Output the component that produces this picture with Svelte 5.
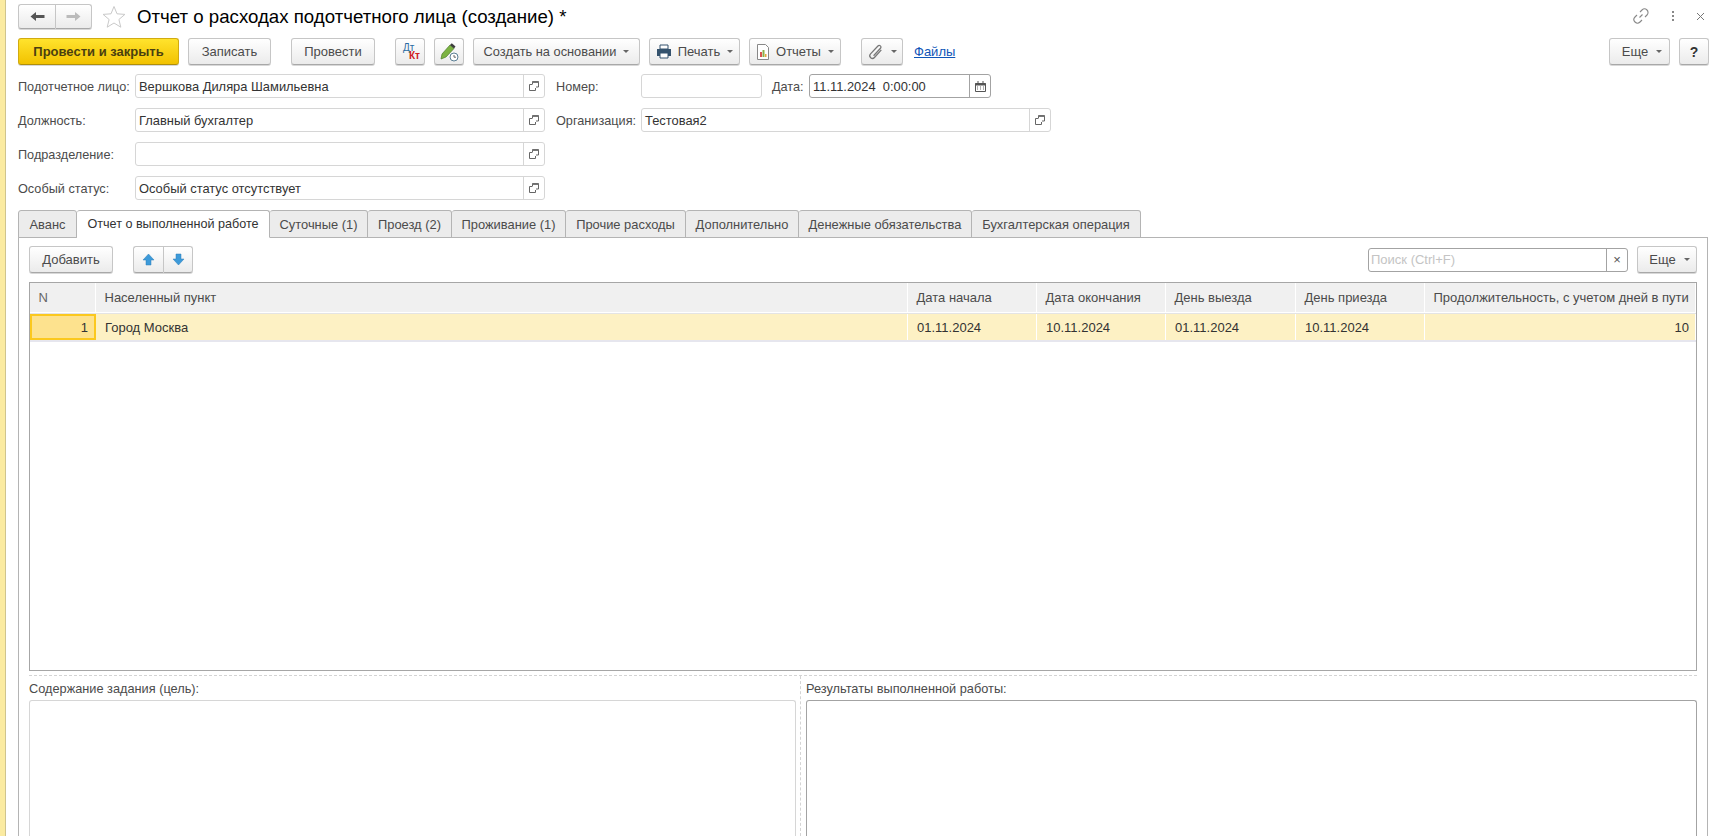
<script>
  const tabs = [
    { label: 'Аванс', w: 59 },
    { label: 'Отчет о выполненной работе', w: 193, active: true },
    { label: 'Суточные (1)', w: 98 },
    { label: 'Проезд (2)', w: 84 },
    { label: 'Проживание (1)', w: 114 },
    { label: 'Прочие расходы', w: 120 },
    { label: 'Дополнительно', w: 113 },
    { label: 'Денежные обязательства', w: 173 },
    { label: 'Бухгалтерская операция', w: 169 }
  ];

  const columns = [
    { title: 'N', value: '1', right: true, current: true },
    { title: 'Населенный пункт', value: 'Город Москва' },
    { title: 'Дата начала', value: '01.11.2024' },
    { title: 'Дата окончания', value: '10.11.2024' },
    { title: 'День выезда', value: '01.11.2024' },
    { title: 'День приезда', value: '10.11.2024' },
    { title: 'Продолжительность, с учетом дней в пути', value: '10', right: true }
  ];

  const people = [
    { label: 'Подотчетное лицо:', value: 'Вершкова Диляра Шамильевна' },
    { label: 'Должность:', value: 'Главный бухгалтер' },
    { label: 'Подразделение:', value: '' },
    { label: 'Особый статус:', value: 'Особый статус отсутствует' }
  ];
</script>

{#snippet openIcon()}
  <svg width="10" height="10" viewBox="0 0 10 10" fill="none" stroke="#666">
    <path d="M3.500 3V.5h6v5.500H7" />
    <path d="M.5 3.500h3M.5 3.500v6h6V7" />
    <path d="M3.500 .5h6v1.500h-6z" fill="#777" stroke="none" />
  </svg>
{/snippet}

{#snippet caret()}
  <span class="caret"></span>
{/snippet}

<div class="page">
  <div class="stripe"></div>
  <div class="content">
    <header class="titlebar">
      <div class="group nav">
        <button class="btn seg" aria-label="Назад">
          <svg width="15" height="11" viewBox="0 0 15 11"><path d="M.5 5.500L6 1v3h8.500v3H6v3z" fill="#555" /></svg>
        </button>
        <button class="btn seg" aria-label="Вперед">
          <svg width="15" height="11" viewBox="0 0 15 11"><path d="M14.500 5.500L9 1v3H.5v3H9v3z" fill="#bbb" /></svg>
        </button>
      </div>
      <svg class="star" width="24" height="23" viewBox="0 0 24 23"><path d="M12 1.500l3 7.300 7.900.6-6 5.100 1.900 7.700L12 18l-6.800 4.200 1.900-7.700-6-5.100 7.900-.6z" fill="#fff" stroke="#c9c9c9" /></svg>
      <h1>Отчет о расходах подотчетного лица (создание) *</h1>
      <div class="window-tools">
        <svg width="18" height="18" viewBox="0 0 18 18" fill="none" stroke="#888" stroke-width="1.100"><path d="M7.500 10.500l3-3M8 5l2-2a3 3 0 0 1 5 5l-2 2M10 13l-2 2a3 3 0 0 1-5-5l2-2" /></svg>
        <span class="dots"><i></i><i></i><i></i></span>
        <svg width="9" height="9" viewBox="0 0 9 9" stroke="#777"><path d="M1 1l7 7M8 1L1 8" /></svg>
      </div>
    </header>

    <div class="toolbar">
      <button class="btn primary">Провести и закрыть</button>
      <button class="btn w83">Записать</button>
      <button class="btn w84 ml11">Провести</button>
      <button class="btn icon ml11 dtkt" aria-label="Дт Кт"><span class="dt">Дт</span><span class="kt">Кт</span></button>
      <button class="btn icon" aria-label="История">
        <svg width="20" height="20" viewBox="0 0 20 20">
          <path d="M2 17l1-5 8-9 4 3.500-8 8.500z" fill="#7cb342" stroke="#4d7c2a" stroke-width=".7" />
          <path d="M11 3l1.800-1.800 3.700 3.200L15 6.500z" fill="#3d3d3d" />
          <circle cx="15" cy="15" r="4" fill="#fff" stroke="#5b7f95" />
          <path d="M15 13v2.200h2" fill="none" stroke="#444" stroke-width=".8" />
        </svg>
      </button>
      <button class="btn menu w167"><span class="tight">Создать на основании</span> {@render caret()}</button>
      <button class="btn menu w91">
        <svg width="16" height="15" viewBox="0 0 16 15">
          <path d="M4 1h8v4H4z" fill="#fff" stroke="#35536e" />
          <path d="M1 5h14v7H1z" fill="#35536e" />
          <path d="M4 9h8v5H4z" fill="#fff" stroke="#35536e" />
        </svg>
        Печать {@render caret()}
      </button>
      <button class="btn menu w92">
        <svg width="14" height="16" viewBox="0 0 14 16">
          <path d="M1.500.5h8l3 3v12h-11z" fill="#fff" stroke="#888" />
          <path d="M4 8h2v5H4z" fill="#d9534f" />
          <path d="M6.500 6h2v7h-2z" fill="#8bb04a" />
          <path d="M9 10h1.500v3H9z" fill="#e8a33d" />
        </svg>
        Отчеты {@render caret()}
      </button>
      <button class="btn menu w42 ml11" aria-label="Вложения">
        <svg width="17" height="18" viewBox="0 0 15 17" fill="none" stroke="#777" stroke-width="1.200"><path d="M13 6.500l-6.500 7.200a2.500 2.500 0 0 1-3.700-3.400l7-7.500a1.600 1.600 0 0 1 2.400 2.200l-6.500 7" /></svg>
        {@render caret()}
      </button>
      <span class="files">Файлы</span>
      <div class="spacer"></div>
      <button class="btn menu w61 more">Еще {@render caret()}</button>
      <button class="btn help">?</button>
    </div>

    <section class="form">
      <div class="people">
        {#each people as p}
          <span class="label">{p.label}</span>
          <div class="field">
            <span class="val">{p.value}</span>
            <span class="choice">{@render openIcon()}</span>
          </div>
        {/each}
      </div>
      <div class="doc">
        <div class="doc-row">
          <span class="label w85">Номер:</span>
          <div class="field w121"></div>
          <span class="label date-label">Дата:</span>
          <div class="field focus w182">
            <span class="val">11.11.2024 &nbsp;0:00:00</span>
            <span class="choice">
              <svg width="11" height="11" viewBox="0 0 11 11">
                <path d="M.5 2.500h10v8H.5z" fill="#fff" stroke="#555" />
                <path d="M.5 2h10v2.500H.5z" fill="#555" />
                <path d="M2.500 0h1v3h-1zM7.500 0h1v3h-1z" fill="#555" />
                <path d="M2 5.500h1v1H2zM5 5.500h1v1H5zM8 5.500h1v1H8zM2 7.500h1v1H2zM5 7.500h1v1H5zM8 7.500h1v1H8z" fill="#666" />
              </svg>
            </span>
          </div>
        </div>
        <div class="doc-row">
          <span class="label w85">Организация:</span>
          <div class="field w410">
            <span class="val">Тестовая2</span>
            <span class="choice">{@render openIcon()}</span>
          </div>
        </div>
      </div>
    </section>

    <nav class="tabs">
      {#each tabs as t}
        <div class="tab" class:active={t.active} style="width: {t.w}px">{t.label}</div>
      {/each}
    </nav>

    <section class="panel">
      <div class="panel-bar">
        <button class="btn w84">Добавить</button>
        <div class="group arrows">
          <button class="btn seg" aria-label="Вверх">
            <svg width="13" height="13" viewBox="0 0 13 13"><path d="M6.500 1L12 7H9v5H4V7H1z" fill="#3d9ad9" stroke="#2c7fb8" stroke-width=".5" /></svg>
          </button>
          <button class="btn seg" aria-label="Вниз">
            <svg width="13" height="13" viewBox="0 0 13 13"><path d="M6.500 12L12 6H9V1H4v5H1z" fill="#3d9ad9" stroke="#2c7fb8" stroke-width=".5" /></svg>
          </button>
        </div>
        <div class="spacer"></div>
        <div class="search">
          <span class="placeholder">Поиск (Ctrl+F)</span>
          <span class="clear">×</span>
        </div>
        <button class="btn menu w60 more">Еще {@render caret()}</button>
      </div>

      <div class="grid">
        <div class="grid-head">
          {#each columns as c}
            <div class="th">{c.title}</div>
          {/each}
        </div>
        <div class="grid-row">
          {#each columns as c}
            <div class="td" class:right={c.right} class:current={c.current}>{c.value}</div>
          {/each}
        </div>
      </div>

      <div class="notes">
        <div class="note left">
          <div class="note-label">Содержание задания (цель):</div>
          <div class="area"></div>
        </div>
        <div class="note">
          <div class="note-label">Результаты выполненной работы:</div>
          <div class="area dark"></div>
        </div>
      </div>
    </section>
  </div>
</div>

<style>
  :global(body) {
    background: #fff;
    font-family: "Liberation Sans", Arial, sans-serif;
    font-size: 13px;
    color: #4b4b4b;
  }

  .page {
    display: flex;
    height: 836px;
    overflow: hidden;
  }

  .stripe {
    width: 5px;
    background: #fbeba1;
    border-right: 1px solid #cfc48d;
  }

  .content {
    flex: 1;
    min-width: 0;
    display: flex;
    flex-direction: column;
    padding: 0 10px 0 12px;
  }

  .spacer {
    flex: 1;
  }

  .titlebar {
    height: 38px;
    display: flex;
    align-items: center;
    padding-bottom: 6px;
    box-sizing: border-box;
  }

  h1 {
    margin: 2px 0 0 11px;
    font-size: 18.67px;
    font-weight: normal;
    color: #000;
  }

  .star {
    margin-left: 10px;
  }

  .window-tools {
    margin-left: auto;
    display: flex;
    align-items: center;
    gap: 22px;
    padding-right: 4px;
  }

  .dots {
    display: flex;
    flex-direction: column;
    gap: 2px;
  }

  .dots i {
    width: 2px;
    height: 2px;
    background: #888;
  }

  .btn {
    height: 27px;
    box-sizing: border-box;
    padding: 0;
    font: inherit;
    color: #4b4b4b;
    background: linear-gradient(#fff, #ebebeb);
    border: 1px solid #c6c6c6;
    border-bottom-color: #a8a8a8;
    border-radius: 3px;
    display: inline-flex;
    align-items: center;
    justify-content: center;
    box-shadow: 0 1px 0 #d8d8d8;
  }

  .group {
    display: flex;
    background: #fff;
  }

  .group .seg {
    border-radius: 0;
    border-right: 0;
  }

  .group .seg:first-child {
    border-radius: 3px 0 0 3px;
  }

  .group .seg:last-child {
    border-radius: 0 3px 3px 0;
    border-right: 1px solid #c6c6c6;
  }

  .nav .seg {
    width: 37px;
    height: 25px;
  }

  .toolbar {
    display: flex;
    gap: 9px;
    align-items: center;
    height: 27px;
  }

  .primary {
    width: 161px;
    font-weight: bold;
    color: #4a3f10;
    background: linear-gradient(#ffe32d, #f2c200);
    border-color: #d1ab10;
    border-bottom-color: #b08f0a;
  }

  .w83 { width: 83px; }
  .w84 { width: 84px; }
  .w167 { width: 167px; }
  .w91 { width: 91px; }
  .w92 { width: 92px; }
  .w42 { width: 42px; }
  .w61 { width: 61px; }
  .w60 { width: 60px; }
  .ml11 { margin-left: 11px; }

  .icon {
    width: 30px;
  }

  .dtkt {
    position: relative;
  }

  .dt {
    position: absolute;
    left: 7px;
    top: 3px;
    font-size: 10px;
    color: #2b6ca3;
  }

  .kt {
    position: absolute;
    left: 13px;
    top: 11px;
    font-size: 10px;
    font-weight: bold;
    color: #d02020;
  }

  .menu {
    gap: 6px;
  }

  .more {
    gap: 7px;
    padding-left: 5px;
  }

  .tight {
    font-size: 12.8px;
  }

  .caret {
    width: 0;
    height: 0;
    border-left: 3px solid transparent;
    border-right: 3px solid transparent;
    border-top: 3px solid #666;
    margin-left: 1px;
  }

  .files {
    margin-left: 2px;
    color: #0f56b8;
    text-decoration: underline;
  }

  .help {
    width: 30px;
    font-size: 14px;
    font-weight: bold;
    color: #333;
  }

  .form {
    display: flex;
    gap: 11px;
    margin-top: 9px;
  }

  .people {
    display: grid;
    grid-template-columns: 117px 410px;
    grid-auto-rows: 24px;
    row-gap: 10px;
    align-items: center;
  }

  .label {
    white-space: nowrap;
    font-size: 12.7px;
    padding-top: 1px;
  }

  .field {
    height: 24px;
    box-sizing: border-box;
    border: 1px solid #d6d6d6;
    border-radius: 3px;
    display: flex;
    align-items: center;
    background: #fff;
  }

  .val {
    flex: 1;
    padding-left: 3px;
    color: #333;
    font-size: 12.9px;
  }

  .choice {
    width: 20px;
    height: 100%;
    border-left: 1px solid #d6d6d6;
    display: flex;
    align-items: center;
    justify-content: center;
  }

  .doc {
    display: flex;
    flex-direction: column;
    gap: 10px;
  }

  .doc-row {
    display: flex;
    align-items: center;
    height: 24px;
  }

  .w85 { width: 85px; }
  .w121 { width: 121px; }
  .w182 { width: 182px; }
  .w410 { width: 410px; }

  .date-label {
    width: 37px;
    margin-left: 10px;
  }

  .focus {
    border-color: #a3a3a3;
  }

  .focus .choice {
    border-left-color: #a3a3a3;
  }

  .tabs {
    display: flex;
    margin-top: 10px;
    height: 28px;
    position: relative;
    z-index: 1;
  }

  .tab {
    box-sizing: border-box;
    height: 28px;
    display: flex;
    align-items: center;
    justify-content: center;
    background: #ececec;
    border: 1px solid #b4b4b4;
    border-left-width: 0;
    border-radius: 3px 3px 0 0;
    white-space: nowrap;
    font-size: 12.9px;
  }

  .tab:first-child {
    border-left-width: 1px;
  }

  .tab.active {
    background: #fff;
    border-bottom-color: #fff;
    color: #333;
    font-size: 12.6px;
  }

  .panel {
    flex: 1;
    min-height: 0;
    margin-top: -1px;
    border: 1px solid #b4b4b4;
    border-bottom: 0;
    padding: 8px 10px 0 10px;
    display: flex;
    flex-direction: column;
    width: 1690px;
    box-sizing: border-box;
  }

  .panel-bar {
    display: flex;
    align-items: center;
    height: 27px;
  }

  .arrows {
    margin-left: 20px;
  }

  .arrows .seg {
    width: 30px;
  }

  .search {
    width: 260px;
    height: 24px;
    box-sizing: border-box;
    border: 1px solid #a3a3a3;
    border-radius: 3px;
    display: flex;
    align-items: center;
    margin-right: 9px;
  }

  .placeholder {
    flex: 1;
    padding-left: 2px;
    color: #c4c4c4;
  }

  .clear {
    width: 20px;
    height: 100%;
    border-left: 1px solid #a3a3a3;
    display: flex;
    align-items: center;
    justify-content: center;
    color: #555;
  }

  .grid {
    height: 389px;
    margin-top: 9px;
    box-sizing: border-box;
    border: 1px solid #a6a6a6;
    --cols: 66px 812px 129px 129px 130px 129px 1fr;
  }

  .grid-head,
  .grid-row {
    display: grid;
    grid-template-columns: var(--cols);
  }

  .grid-head {
    height: 30px;
    border-bottom: 1px solid #e4e4e4;
  }

  .th {
    background: #f0f0f0;
    border-right: 1px solid #fff;
    border-bottom: 1px solid #fff;
    display: flex;
    align-items: center;
    padding-left: 8.5px;
    padding-bottom: 1px;
    white-space: nowrap;
  }

  .th:first-child {
    color: #666;
  }

  .grid-row {
    height: 26px;
    border-bottom: 2px solid #e6e6ee;
  }

  .td {
    background: #fdf1c4;
    border-right: 1px solid #fff;
    display: flex;
    align-items: center;
    padding: 0 9px;
    color: #333;
  }

  .td.right {
    justify-content: flex-end;
    padding-right: 6px;
  }

  .td.current {
    background: #fde28e;
    border: 2px solid #fbc81e;
    box-sizing: border-box;
  }

  .notes {
    flex: 1;
    min-height: 0;
    display: grid;
    grid-template-columns: 772px 1fr;
    margin-top: 4px;
    border-top: 1px dashed #d4d4d4;
  }

  .note {
    display: flex;
    flex-direction: column;
  }

  .note.left {
    border-right: 1px dashed #d4d4d4;
    padding-right: 4px;
  }

  .note + .note {
    padding-left: 5px;
  }

  .note-label {
    height: 24px;
    display: flex;
    align-items: center;
    font-size: 12.75px;
  }

  .area {
    flex: 1;
    border: 1px solid #d6d6d6;
    border-bottom: 0;
    border-radius: 3px 3px 0 0;
  }

  .area.dark {
    border-color: #a3a3a3;
  }
</style>
